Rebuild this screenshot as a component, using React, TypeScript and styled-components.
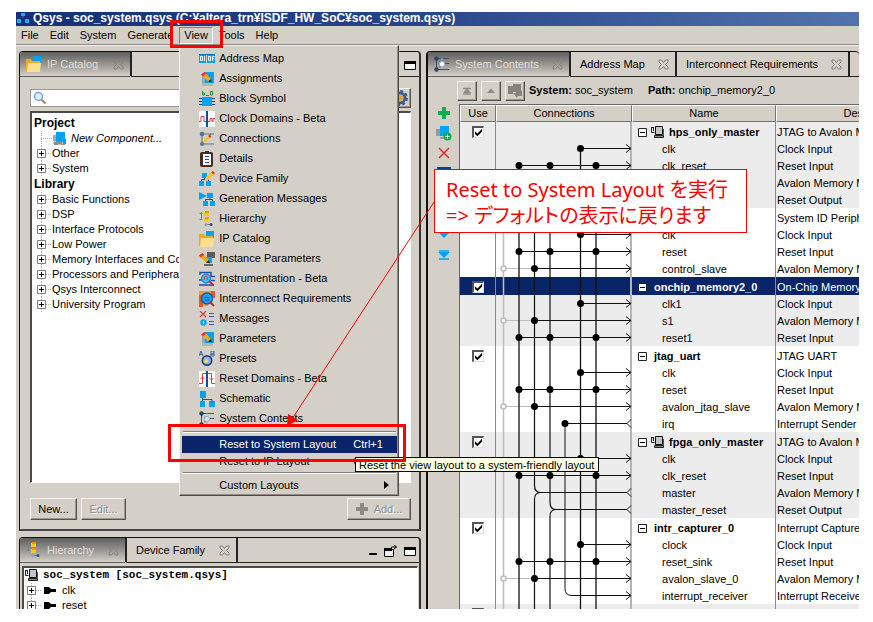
import React from "react";
import styled, { createGlobalStyle, css } from "styled-components";

const FACE = "#d4d0c8";
const NAVY = "#0a246a";
const AZURE = "#00a2f2";
const UI_FONT = '"Liberation Sans", "Noto Sans CJK JP", sans-serif';

const GlobalStyle = createGlobalStyle`
  * { box-sizing: border-box; }
  body { margin: 0; background: #fff; color: #000; font: 11px/15px ${UI_FONT}; }
  button, input { font: inherit; color: inherit; }
`;

/* ---------- shell ---------- */

const Page = styled.div`
  position: relative;
  height: 100vh;
  padding: 12px 14px 13px 16px;
  overflow: hidden;
`;

const Frame = styled.div`
  display: flex;
  flex-direction: column;
  height: 100%;
  background: ${FACE};
`;

const TitleBar = styled.header`
  display: flex;
  align-items: flex-start;
  gap: 4px;
  height: 14px;
  padding-left: 1px;
  overflow: hidden;
  white-space: nowrap;
  background: linear-gradient(to right, #14307a, #26438a 45%, #5373ab);
  color: #fff;
  font-size: 12px;
  line-height: 12px;
  font-weight: bold;
`;

const MenuBar = styled.nav`
  display: flex;
  align-items: center;
  gap: 1px;
  height: 19px;
  border-bottom: 1px solid #8d8a84;
  box-shadow: 0 1px 0 #f4f2ee;
`;

const MenuSlot = styled.div`
  position: relative;
`;

const MenuTitle = styled.button<{ $open?: boolean }>`
  height: 17px;
  padding: 0 4px;
  border: 1px solid transparent;
  background: transparent;
  line-height: 15px;
  ${(p) => p.$open && css`border-color: #808080 #fff #fff #808080;`}
`;

const Body = styled.main`
  display: flex;
  gap: 5px;
  flex: 1;
  min-height: 0;
  padding: 6px 0 0 3px;
`;

const LeftColumn = styled.div`
  display: flex;
  flex-direction: column;
  gap: 6px;
  flex: 403 1 0;
  min-width: 0;
`;

const Panel = styled.section<{ $open?: boolean; $grow?: number }>`
  display: flex;
  flex-direction: column;
  flex: ${(p) => p.$grow ?? 1} 1 0;
  min-width: 0;
  min-height: 0;
  overflow: hidden;
  border: 1px solid #111;
  border-width: ${(p) => (p.$open ? "1px 0 0 2px" : "1px 2px 2px 1px")};
  border-right-color: #333;
  border-bottom-color: #444;
  border-radius: 4px 4px 0 0;
`;

const BottomPanel = styled(Panel)`
  flex: 0 0 72px;
  border-bottom-width: 0;
`;

const TabStrip = styled.div`
  display: flex;
  height: 25px;
  flex: none;
`;

const Tab = styled.button<{ $active?: boolean; $basis: number }>`
  display: flex;
  align-items: center;
  flex: 0 0 ${(p) => p.$basis}px;
  gap: 5px;
  padding: 0 6px 0 9px;
  border: 0;
  border-right: 2px solid #222;
  border-bottom: 1px solid #222;
  background: transparent;
  white-space: nowrap;
  svg:last-child { margin-left: auto; }
  ${(p) =>
    p.$active &&
    css`
      padding-left: 6px;
      border-bottom-color: transparent;
      background: linear-gradient(#5f5f5f, #8b8986 40%, ${FACE});
      color: #dedcd8;
    `}
`;

const TabFill = styled.div`
  display: flex;
  flex: 1;
  align-items: center;
  justify-content: flex-end;
  gap: 6px;
  padding: 3px 3px 0 0;
  border-bottom: 1px solid #222;
`;

const PlainIconButton = styled.button`
  display: flex;
  padding: 0;
  border: 0;
  background: transparent;
`;

/* ---------- IP catalog ---------- */

const CatalogBody = styled.div`
  display: flex;
  flex-direction: column;
  flex: 1;
  min-height: 0;
  padding: 10px 8px 9px 10px;
`;

const SearchRow = styled.div`
  display: flex;
  align-items: center;
  gap: 4px;
  height: 21px;
`;

const SearchField = styled.label`
  display: flex;
  align-items: center;
  flex: 1;
  height: 18px;
  padding-left: 2px;
  border: 1px solid #9b9893;
  background: #fff;
`;

const SearchInput = styled.input`
  flex: 1;
  min-width: 0;
  height: 14px;
  border: 0;
  outline: 0;
  background: transparent;
`;

const RaisedButton = styled.button<{ $w: number; $h?: number }>`
  display: flex;
  align-items: center;
  justify-content: center;
  gap: 6px;
  width: ${(p) => p.$w}px;
  height: ${(p) => p.$h ?? 22}px;
  padding: 0;
  border: 1px solid;
  border-color: #f6f4f0 #55534f #55534f #f6f4f0;
  box-shadow: inset -1px -1px 0 #9a978f;
  background: ${FACE};
  &:disabled { color: #8d8a84; text-shadow: 1px 1px 0 #fff; }
`;

const TreeBox = styled.div`
  flex: 1;
  min-height: 0;
  margin-top: 3px;
  padding: 2px 0 0 2px;
  overflow: hidden;
  border: 1px solid;
  border-width: 2px 1px 1px 2px;
  border-color: #4d4b48 #fff #fff #4d4b48;
  background: #fff;
`;

const TreeList = styled.ul`
  margin: 0;
  padding: 0;
  list-style: none;
`;

const TreeHeading = styled.li`
  height: 16px;
  font-size: 12px;
  font-weight: bold;
  line-height: 16px;
`;

const TreeRow = styled.li<{ $italic?: boolean }>`
  display: flex;
  align-items: center;
  height: 15px;
  padding-left: 3px;
  font-style: ${(p) => (p.$italic ? "italic" : "normal")};
  white-space: nowrap;
`;

const Actions = styled.div`
  display: flex;
  gap: 4px;
  margin-top: 15px;
  button:last-child { margin-left: auto; }
`;

const HierarchyBox = styled(TreeBox)`
  margin: 3px 1px 0 2px;
  padding: 0;
  border-bottom: 0;
`;

const RootRow = styled.li`
  display: flex;
  align-items: center;
  gap: 4px;
  height: 15px;
  padding-left: 1px;
  font-family: "Liberation Mono", monospace;
  font-weight: bold;
  white-space: nowrap;
`;

const PinRow = styled(TreeRow)`
  gap: 6px;
  svg:first-child { margin-right: -4px; }
`;

/* ---------- popup menu ---------- */

const Popup = styled.div`
  position: absolute;
  z-index: 5;
  top: 18px;
  left: 0;
  width: 220px;
  padding: 3px 1px 1px 2px;
  border: 1px solid;
  border-color: #f6f4f0 #4d4b48 #4d4b48 #f6f4f0;
  box-shadow: inset -1px -1px 0 #8f8c86;
  background: ${FACE};
`;

const Item = styled.button<{ $compact?: boolean; $selected?: boolean }>`
  display: flex;
  align-items: center;
  gap: 4px;
  width: 100%;
  height: ${(p) => (p.$compact ? 17 : 20)}px;
  padding: 0 8px 0 ${(p) => (p.$compact ? 37 : 17)}px;
  border: 0;
  text-align: left;
  white-space: nowrap;
  background: ${(p) => (p.$selected ? NAVY : "transparent")};
  color: ${(p) => (p.$selected ? "#fff" : "#000")};
`;

const Shortcut = styled.span`
  width: 36px;
  margin-left: auto;
`;

const Arrow = styled.span`
  margin-left: auto;
  border: solid transparent;
  border-width: 4px 0 4px 5px;
  border-left-color: #000;
`;

const Rule = styled.hr`
  height: 2px;
  margin: 2px 1px 3px;
  border: 0;
  border-top: 1px solid #808080;
  border-bottom: 1px solid #fff;
`;

/* ---------- system contents ---------- */

const Toolbar = styled.div`
  display: flex;
  align-items: center;
  gap: 4px;
  flex: none;
  height: 27px;
  padding-left: 29px;
  white-space: nowrap;
`;

const PathText = styled.span`
  margin-right: 11px;
`;

const ContentRow = styled.div`
  display: flex;
  flex: 1;
  min-height: 0;
`;

const SideBar = styled.div`
  display: flex;
  flex-direction: column;
  gap: 6px;
  flex: 0 0 31px;
  padding-top: 1px;
`;

const SideGroup = styled.div`
  display: flex;
  flex-direction: column;
  align-items: center;
  gap: 4px;
`;

const SideButton = styled(PlainIconButton)`
  align-items: center;
  justify-content: center;
  width: 16px;
  height: 16px;
`;

const TableArea = styled.div`
  position: relative;
  flex: 1;
  min-width: 0;
  overflow: hidden;
  border-left: 1px solid #666;
  border-top: 1px solid #666;
  background: #fff;
`;

const Grid = styled.table`
  width: 506px;
  border-collapse: separate;
  border-spacing: 0;
  table-layout: fixed;
`;

const Th = styled.th<{ $w: number }>`
  width: ${(p) => p.$w}px;
  height: 17px;
  padding: 0;
  border: 1px solid;
  border-color: #fff #77746f #77746f #fff;
  background: ${FACE};
  font-weight: normal;
  line-height: 15px;
`;

const Tr = styled.tr<{ $shade?: boolean; $selected?: boolean; $head?: boolean }>`
  height: ${(p) => (p.$head ? 18 : 17)}px;
  background: ${(p) => (p.$selected ? NAVY : p.$shade ? "#ececec" : "#fff")};
  color: ${(p) => (p.$selected ? "#fff" : "#000")};
`;

const Td = styled.td`
  padding: 2px 0 0 1px;
  border-right: 1px solid #8a8a8a;
  line-height: 15px;
  white-space: nowrap;
  overflow: hidden;
`;

const WireTd = styled(Td)`
  border-right: 2px solid #b4b4b4;
`;

const NameCell = styled.div<{ $head?: boolean }>`
  display: flex;
  align-items: center;
  gap: ${(p) => (p.$head ? 4 : 0)}px;
  padding-left: ${(p) => (p.$head ? 5 : 29)}px;
  font-weight: ${(p) => (p.$head ? "bold" : "normal")};
`;

const NameLabel = styled.span<{ $indent?: boolean }>`
  padding-left: ${(p) => (p.$indent ? 3 : 0)}px;
`;

const Check = styled.input`
  display: block;
  appearance: none;
  width: 12px;
  height: 12px;
  margin: 0 auto;
  border: 1px solid;
  border-width: 2px 1px 1px 2px;
  border-color: #555 #ddd #ddd #555;
  background: #fff;
  &:checked::before {
    content: "";
    display: block;
    width: 9px;
    height: 9px;
    background: #000;
    clip-path: polygon(10% 35%, 38% 60%, 90% 8%, 90% 38%, 38% 92%, 10% 66%);
  }
`;

const Wires = styled.svg`
  position: absolute;
  top: 17px;
  left: 37px;
  width: 135px;
  height: 487px;
  pointer-events: none;
`;

/* ---------- callouts ---------- */

const Tooltip = styled.div`
  position: absolute;
  z-index: 6;
  left: 355px;
  top: 457px;
  height: 15px;
  padding: 0 4px 0 3px;
  border: 1px solid #000;
  background: #ffffe1;
  line-height: 14px;
  white-space: nowrap;
`;

const Highlight = styled.div<{ $x: number; $y: number; $w: number; $h: number }>`
  position: absolute;
  z-index: 8;
  left: ${(p) => p.$x}px;
  top: ${(p) => p.$y}px;
  width: ${(p) => p.$w}px;
  height: ${(p) => p.$h}px;
  border: 3px solid #f00;
  pointer-events: none;
`;

const Pointer = styled.svg`
  position: absolute;
  z-index: 7;
  left: 280px;
  top: 190px;
  pointer-events: none;
`;

const Note = styled.aside`
  position: absolute;
  z-index: 9;
  left: 434px;
  top: 169px;
  width: 313px;
  height: 64px;
  padding: 7px 0 0 11px;
  border: 1px solid #f00;
  background: #fff;
  color: #f00;
  font: 20px/26px "Noto Sans", "Noto Sans CJK JP", sans-serif;
  font-feature-settings: "palt";
  white-space: nowrap;
`;

/* ---------- icons ---------- */

const Drawing = styled.svg`
  flex: none;
`;

type P = { children: React.ReactNode; w?: number; h?: number };
const Svg = ({ children, w = 16, h = 16 }: P) => (
  <Drawing width={w} height={h} viewBox={`0 0 ${w} ${h}`} fill="none" aria-hidden="true">
    {children}
  </Drawing>
);

const Pencil = ({ dx = 0, dy = 0 }: { dx?: number; dy?: number }) => (
  <g transform={`translate(${dx} ${dy})`}>
    <path d="M0 2.500 3.500 0 10 7 7 9.500Z" fill="#f5a81c" />
    <path d="M0 2.500 3.500 0 5.200 1.800 1.800 4.400Z" fill="#e8352b" />
    <path d="M10 7 11 10.500 7 9.500Z" fill="#4a2f10" />
  </g>
);

const FolderIcon = () => (
  <Svg>
    <path d="M7 0h8v8H7z" fill={AZURE} />
    <path d="M0 3h5l1 2h8v10H0z" fill="#f2a91f" />
    <path d="M2 7h13l-1 9H1z" fill="#fddf94" />
  </Svg>
);
const ComponentIcon = () => (
  <Svg w={16} h={14}>
    <path d="M1 3h4v6H1z" fill="#a9a9a9" />
    <path d="M4 0h9v10H4z" fill={AZURE} />
    <path d="M2 10h8v2H2zM2 12.500h4M9 12.500h4" fill="#8b9096" stroke="#8b9096" />
    <path d="M11 7h3v5h-3z" fill={AZURE} />
  </Svg>
);
const AddComponentIcon = () => (
  <Svg>
    <path d="M0 4h5v7H0z" fill="#9a9a9a" />
    <path d="M4 1h9v10H4z" fill={AZURE} />
    <path d="M4 12h5v2H4z" fill="#9a9a9a" />
    <circle cx="11.500" cy="11.500" r="4" fill="#09b04c" />
    <path d="M9.500 11.500h4M11.500 9.500v4" stroke="#fff" />
  </Svg>
);
const AddressIcon = () => (
  <Svg>
    <path d="M0 3h7v9H0zM8 3h8v9H8z" fill={AZURE} />
    <path d="M0 3.500h16" stroke="#0070c8" />
    <path d="M1.500 5.500h2v4h-2zM5.500 5v5M9.500 5.500h2v4h-2zM13.500 10V5.500h2M13.500 7.500h1.500" stroke="#fff" />
  </Svg>
);
const AssignIcon = () => (
  <Svg>
    <path d="M6 1h9v11H6z" fill={AZURE} />
    <path d="M3 4h3v8H3z" fill="#8fa7b8" />
    <path d="M3 12h11v3H3z" fill="#b5b5b5" />
    <Pencil dx={2} dy={1} />
  </Svg>
);
const BlockIcon = () => (
  <Svg>
    <path d="M3 6h10v9H3z" fill={AZURE} />
    <path d="M0 7.500h3M0 10.500h3M0 13.500h3M13 7.500h3M13 10.500h3M13 13.500h3" stroke="#17406e" />
    <path d="M3.500 0v4h2V2H4M7 4.500h3M11.500 .500h2v3.500h-2z" stroke="#2b8a3a" />
  </Svg>
);
const ClockIcon = () => (
  <Svg>
    <path d="M0 0h16v16H0z" fill="#fff" />
    <path d="M0 10.500h2v-5h3v5h2M9 10.500h2v-3h2v3h1v-3h2" stroke="#e53935" />
    <path d="M8 0v16" stroke="#0b4fa0" strokeWidth="2" />
  </Svg>
);
const ConnIcon = () => (
  <Svg>
    <path d="M3 3h12M3 3v10h12M3 13 12 3" stroke="#5b7288" />
    <circle cx="3" cy="3" r="2.300" fill="#5b7288" />
    <circle cx="3" cy="13" r="2" fill="#5b7288" />
    <path d="m4 12 1-3 5-5 2 2-5 5z" fill="#f7c52b" />
    <path d="m9 5 2 2 1.500-1.500-2-2z" fill="#e8352b" />
  </Svg>
);
const DetailIcon = () => (
  <Svg>
    <rect x="1" y="1" width="13" height="15" rx="2" fill="#4a2b20" />
    <path d="M4 3h8v11H4z" fill="#fff" />
    <path d="M6 0h4v3H6z" fill="#333" />
    <path d="M6 5.500h4M6 8.500h4M6 11.500h4" stroke="#2c4a9a" />
  </Svg>
);
const DeviceIcon = () => (
  <Svg>
    <path d="M3 2h5v5H3zM0 10h5v5H0zM7 10h5v5H7z" fill={AZURE} />
    <path d="M5.500 7v2M2.500 10V8.500h7V10" stroke="#15568f" />
    <path d="m6 9 1-3 6-5 3 2-7 6z" fill="#f7c52b" />
    <path d="m12 1.500 2-1.500 2 2-1.500 1.500z" fill="#e8352b" />
  </Svg>
);
const GenIcon = () => (
  <Svg>
    <path d="M0 1 8 5 0 9z" fill={AZURE} />
    <path d="M8 2h6v5H8zM4 10h5v5H4zM11 10h5v5h-5z" fill={AZURE} />
    <path d="M11 7v2M6.500 10V8.500h7V10" stroke="#15568f" />
  </Svg>
);
const HierIcon = () => (
  <Svg>
    <path d="M2.500 1v8M.500 2.500h3M.500 8.500h3" stroke="#6d7f92" />
    <path d="M5 1h5v4H5zM5 7h5v4H5z" fill="#f7c52b" />
    <path d="M6 0h4v2H6zM6 6h4v2H6z" fill="#e39a12" />
    <path d="M7 13.500h5" stroke="#6d7f92" />
    <circle cx="7" cy="13.500" r="1.500" fill="#8fa0b0" />
    <circle cx="12" cy="13.500" r="1.500" fill="#34526f" />
  </Svg>
);
const InstIcon = () => (
  <Svg>
    <path d="M8 1h8v6H8z" fill="#5c5c5c" />
    <path d="M7 6h6v6H7z" fill={AZURE} />
    <path d="M5 13h9v2H5z" fill="#666" />
    <Pencil dx={0} dy={2} />
  </Svg>
);
const InstrIcon = () => (
  <Svg>
    <path d="M1 4V1.500h11v4h4M0 14h15M0 9h3M12 9.500h4" stroke="#1d4fa8" strokeWidth="1.500" />
    <circle cx="7" cy="7.500" r="4.500" fill="#39bdf5" stroke="#1668b8" />
    <path d="M5.500 9V6l1.500-1 1.500 1v3" stroke="#e53935" />
    <path d="m10 10 4.500 4.500" stroke="#d5232b" strokeWidth="2" />
  </Svg>
);
const InterIcon = () => (
  <Svg>
    <path d="M0 0h12v4H0z" fill="#f59a23" />
    <path d="M0 4h4v12H0zM12 0h4v7h-4z" fill="#ef5327" />
    <path d="M4 13h5v2H4z" fill="#f59a23" />
    <circle cx="8" cy="7.500" r="5.500" fill="#19a6ee" stroke="#0d61b4" strokeWidth="1.500" />
    <path d="M5.500 6.500h5M5.500 9h5" stroke="#0b3f8a" />
    <path d="m11 11 4 4" stroke="#d5232b" strokeWidth="2" />
  </Svg>
);
const MessageIcon = () => (
  <Svg>
    <path d="m1 0 6 6M7 0 1 6" stroke="#e53935" strokeWidth="1.300" />
    <circle cx="4.500" cy="11.500" r="3.200" fill={AZURE} />
    <path d="M4.500 10v3" stroke="#fff" />
    <path d="M10 2.500h5M10 5.500h5M10 10.500h5M10 13.500h5" stroke="#3d5f9f" />
  </Svg>
);
const PresetIcon = () => (
  <Svg>
    <path d="m0 5 2-5 2 5M1 3.500h2M12 0v5h3V3h-3 3V0z" stroke="#3d62a8" />
    <circle cx="8" cy="9.500" r="5.500" fill="#233f85" />
    <circle cx="8" cy="9.500" r="3.800" fill="#8fb8ea" />
    <circle cx="7" cy="10" r="2" fill="#f2dc48" />
  </Svg>
);
const ResetIcon = () => (
  <Svg>
    <path d="M0 0h16v16H0z" fill="#fff" />
    <path d="M0 12.500h3.500v-10h3.500M9 2.500h3.500v10H16M1.500 8l2-2 2 2M10.500 7l2 2 2-2" stroke="#e53935" />
    <path d="M8 0v16" stroke="#0b4fa0" strokeWidth="2" />
  </Svg>
);
const SchemIcon = () => (
  <Svg>
    <path d="M1 0h6v7H1zM1 10h5v6H1zM10 10h6v6h-6z" fill={AZURE} />
    <path d="M3.500 7v3M4 8.500h9V11" stroke="#15568f" />
  </Svg>
);
const ContentsIcon = ({ light }: { light?: boolean }) => (
  <Svg>
    <path d="M3 2.500h12M3 13.500h12M2.500 2v11M6 5.500v6M8 7.500h7" stroke="#405467" />
    <path d="M8 2v12" stroke={light ? "#a8c4e4" : "#9aa9b8"} strokeDasharray="2 1" />
    <circle cx="2.500" cy="2.500" r="2.200" fill="#294766" />
    <circle cx="2.500" cy="13.500" r="2.200" fill="#294766" />
    <circle cx="8" cy="8" r="2.600" fill={light ? "#fff" : "#d8e3ee"} stroke="#9ab4d0" />
  </Svg>
);
const CloseIcon = () => (
  <Svg w={11} h={11}>
    <path
      d="M1 1h2.500l2 2.500 2-2.500H10v2L7.500 5.500 10 8v2H7.500l-2-2.500-2 2.500H1V8l2.500-2.500L1 3z"
      stroke="#85827c"
    />
  </Svg>
);
const MaxIcon = () => (
  <Svg w={12} h={10}>
    <path d="M.5 .5h11v8H.5z" fill="#fff" stroke="#000" />
    <path d="M0 0h12v3H0z" fill="#000" />
  </Svg>
);
const MinIcon = () => (
  <Svg w={9} h={10}>
    <path d="M0 6h8v2H0z" fill="#000" />
  </Svg>
);
const DetachIcon = () => (
  <Svg w={14} h={13}>
    <path d="M.5 4.500h9v7h-9z" fill="#eee" stroke="#000" />
    <path d="M0 3h8v3H0z" fill="#000" />
    <path d="M7.500 5V2h5M10 0l2.500 2L10 4" stroke="#000" />
  </Svg>
);
const SearchIcon = () => (
  <Svg w={14} h={14}>
    <path d="m8.500 8.500 4 4" stroke="#b98a4a" strokeWidth="2.400" />
    <circle cx="5.500" cy="5.500" r="4" fill="#d9efff" stroke="#78a9d8" strokeWidth="1.500" />
  </Svg>
);
const GearIcon = () => (
  <Svg>
    <circle cx="8" cy="8" r="5" stroke="#3d5f94" strokeWidth="3" />
    <circle cx="8" cy="8" r="7" stroke="#3d5f94" strokeWidth="2" strokeDasharray="3 2.500" />
    <circle cx="8" cy="8" r="3" fill="#e8a030" />
  </Svg>
);
const Plus = ({ color }: { color: string }) => (
  <Svg w={12} h={12}>
    <path d="M6 0v12M0 6h12" stroke={color} strokeWidth="4" />
  </Svg>
);
const CrossIcon = () => (
  <Svg w={12} h={12}>
    <path d="m1 1 10 10M11 1 1 11" stroke="#e02b2b" strokeWidth="1.500" />
  </Svg>
);
const EditBarIcon = () => (
  <Svg>
    <path d="M1 2h14v12H1z" fill="#0a3c96" />
    <path d="M3 6h10v6H3z" fill="#fff" />
  </Svg>
);
const Triangle = ({ up, bar, color, size = 12 }: { up?: boolean; bar?: boolean; color: string; size?: number }) => (
  <Svg w={12} h={12}>
    <g transform={up ? "rotate(180 6 6)" : undefined}>
      <path d={size > 10 ? "M0 3h12L6 9z" : "M2 4h8L6 8.500z"} fill={color} />
      {bar && <path d={size > 10 ? "M1 2h10M1 10h10" : "M2 8.500h8M2 3h8"} stroke={color} strokeWidth="1.600" />}
    </g>
  </Svg>
);
const GreyPartIcon = () => (
  <Svg>
    <path d="M1 3h5v8H1zM6 1h8v8H6zM9 8h6v5H9z" fill="#85837e" />
    <path d="m6 10 4 5 2-5z" fill="#85837e" />
  </Svg>
);
const SystemIcon = () => (
  <Svg w={14} h={13}>
    <path d="M4.500 .500h7v8h-7z" fill="#c4c4c4" stroke="#111" />
    <path d="M.500 1v5.500h3M.500 1.500h2M2.500 1v4M5.500 9v2" stroke="#222" />
    <path d="M3.500 9.500h9v2h-9z" fill="#888" stroke="#222" />
    <path d="M12.500 3v6" stroke="#555" />
  </Svg>
);
const PinIcon = () => (
  <Svg w={12} h={9}>
    <path d="M0 1h5l2 2h5v3H7L5 8H0z" fill="#000" />
  </Svg>
);
const Expander = ({ link }: { link?: boolean }) => (
  <Svg w={15} h={15}>
    <path d="M4.500 0v15" stroke="#aaa" strokeDasharray="1 1" />
    {link && <path d="M9 7.500h6" stroke="#aaa" strokeDasharray="1 1" />}
    <path d="M.5 3.500h8v8h-8z" fill="#fff" stroke="#808080" />
    <path d="M2 7.500h5M4.500 5v5" stroke="#000" />
  </Svg>
);
const BranchIcon = () => (
  <Svg w={15} h={15}>
    <path d="M4.500 0v15M4 7.500h11" stroke="#aaa" strokeDasharray="1 1" />
  </Svg>
);
const Minus = () => (
  <Svg w={9} h={9}>
    <path d="M.5 .5h8v8h-8z" fill="#fff" stroke="#222" />
    <path d="M2 4.500h5" stroke="#000" />
  </Svg>
);
const LogoIcon = () => (
  <Svg w={12} h={12}>
    <path d="M4 1h4v3H4zM0 7h4v4H0zM8 7h4v4H8z" fill="#25a8f0" />
    <path d="M5.500 4h1v2h-1z" fill="#4d6ea5" />
  </Svg>
);

/* ---------- data ---------- */

const VIEW_ITEMS: [string, () => React.ReactElement][] = [
  ["Address Map", AddressIcon],
  ["Assignments", AssignIcon],
  ["Block Symbol", BlockIcon],
  ["Clock Domains - Beta", ClockIcon],
  ["Connections", ConnIcon],
  ["Details", DetailIcon],
  ["Device Family", DeviceIcon],
  ["Generation Messages", GenIcon],
  ["Hierarchy", HierIcon],
  ["IP Catalog", FolderIcon],
  ["Instance Parameters", InstIcon],
  ["Instrumentation - Beta", InstrIcon],
  ["Interconnect Requirements", InterIcon],
  ["Messages", MessageIcon],
  ["Parameters", AssignIcon],
  ["Presets", PresetIcon],
  ["Reset Domains - Beta", ResetIcon],
  ["Schematic", SchemIcon],
  ["System Contents", () => <ContentsIcon />],
];

const LIBRARY = [
  "Basic Functions",
  "DSP",
  "Interface Protocols",
  "Low Power",
  "Memory Interfaces and Controllers",
  "Processors and Peripherals",
  "Qsys Interconnect",
  "University Program",
];

type Module = { name: string; desc: string; system?: boolean; selected?: boolean; ports: [string, string][] };

const MM = "Avalon Memory Mapped Slave";
const MODULES: Module[] = [
  {
    name: "hps_only_master", desc: "JTAG to Avalon Master Bridge", system: true,
    ports: [["clk", "Clock Input"], ["clk_reset", "Reset Input"], ["master", MM], ["master_reset", "Reset Output"]],
  },
  {
    name: "sysid_qsys", desc: "System ID Peripheral",
    ports: [["clk", "Clock Input"], ["reset", "Reset Input"], ["control_slave", MM]],
  },
  {
    name: "onchip_memory2_0", desc: "On-Chip Memory (RAM or ROM)", selected: true,
    ports: [["clk1", "Clock Input"], ["s1", MM], ["reset1", "Reset Input"]],
  },
  {
    name: "jtag_uart", desc: "JTAG UART",
    ports: [["clk", "Clock Input"], ["reset", "Reset Input"], ["avalon_jtag_slave", MM], ["irq", "Interrupt Sender"]],
  },
  {
    name: "fpga_only_master", desc: "JTAG to Avalon Master Bridge", system: true,
    ports: [["clk", "Clock Input"], ["clk_reset", "Reset Input"], ["master", MM], ["master_reset", "Reset Output"]],
  },
  {
    name: "intr_capturer_0", desc: "Interrupt Capture Module",
    ports: [["clock", "Clock Input"], ["reset_sink", "Reset Input"], ["avalon_slave_0", MM], ["interrupt_receiver", "Interrupt Receiver"]],
  },
  { name: "led_pio", desc: "PIO (Parallel I/O)", ports: [] },
];

/* Centre line of every table row, in wire-drawing coordinates. */
const CENTRES: number[] = [];
MODULES.reduce((top, m) => {
  CENTRES.push(top + 9);
  m.ports.forEach((_, i) => CENTRES.push(top + 26 + i * 17 + 0.5));
  return top + 18 + m.ports.length * 17;
}, 0);

const LANE = { exported: 6.5, reset: 22, data: 37.5, reset2: 53, irq: 68, clock: 83.5, reset3: 99 };
const END = 134;

const WireDrawing = () => {
  const y = (r: number) => CENTRES[r];
  const bottom = 487;
  const out = (r: number) => <path key={`o${r}`} d={`M${END - 5} ${y(r) - 4}l5 4-5 4`} />;
  const into = (r: number) => <path key={`i${r}`} d={`M${END} ${y(r) - 4}l-4 4 4 4`} />;
  const dot = (x: number, r: number) => <circle key={`${x}-${r}`} cx={x} cy={y(r)} r="3.500" fill="#000" stroke="none" />;
  const clocks = [1, 6, 10, 14, 19, 24];
  const resets = [2, 7, 12, 15, 20, 25];
  const slaves = [8, 11, 16, 26];
  return (
    <Wires fill="none" stroke="#111" aria-hidden="true">
      <g stroke="#bdbdbd">
        <path d={`M${LANE.exported} ${y(3)}V${bottom}`} strokeWidth="1.500" />
        {slaves.map((r) => <path key={r} d={`M${LANE.exported} ${y(r)}H${LANE.data}`} />)}
        {slaves.map((r) => <circle key={`c${r}`} cx={LANE.exported} cy={y(r)} r="2.500" fill="#fff" strokeWidth="1.500" />)}
      </g>
      <path strokeWidth="1.300" d={`M${LANE.reset} ${y(2)}V${bottom}M${LANE.clock} ${y(1)}V${bottom}M${LANE.reset3} ${y(2)}V${bottom}`} />
      <path
        strokeWidth="1.200"
        d={`M${LANE.data} ${y(3)}V${y(21) - 7}q0 7 6 7H${END - 4}M${LANE.data} ${bottom}V${y(21) + 7}q0-7 6-7`}
      />
      <path
        strokeWidth="1.200"
        d={`M${LANE.reset2} ${y(2)}V${y(22) - 7}q0 7 6 7H${END - 4}M${LANE.reset2} ${bottom}V${y(22) + 7}q0-7 6-7`}
      />
      <path d={`M${END - 4} ${y(17)}H${LANE.irq}V${y(27) - 7}q0 7 7 7H${END}`} />
      {clocks.map((r) => <path key={r} d={`M${LANE.clock} ${y(r)}H${END}`} />)}
      {resets.map((r) => <path key={r} d={`M${LANE.reset} ${y(r)}H${END}`} />)}
      {slaves.map((r) => <path key={r} d={`M${LANE.data} ${y(r)}H${END}`} />)}
      {[...clocks, ...resets, ...slaves, 27].map(out)}
      {[17, 21, 22].map(into)}
      {clocks.map((r) => dot(LANE.clock, r))}
      {resets.flatMap((r) => [dot(LANE.reset, r), dot(LANE.reset2, r), dot(LANE.reset3, r)])}
      {slaves.map((r) => dot(LANE.data, r))}
      {dot(LANE.irq, 17)}
    </Wires>
  );
};

/* ---------- views ---------- */

const ViewMenu = () => (
  <Popup role="menu" aria-label="View">
    {VIEW_ITEMS.map(([label, Icon]) => (
      <Item key={label} role="menuitem">
        <Icon />
        {label}
      </Item>
    ))}
    <Rule />
    <Item role="menuitem" $compact $selected>
      Reset to System Layout<Shortcut>Ctrl+1</Shortcut>
    </Item>
    <Item role="menuitem" $compact>
      Reset to IP Layout<Shortcut>Ctrl+2</Shortcut>
    </Item>
    <Rule />
    <Item role="menuitem" $compact aria-haspopup="menu">
      Custom Layouts<Arrow />
    </Item>
  </Popup>
);

const Catalog = () => (
  <Panel aria-label="IP Catalog">
    <TabStrip role="tablist">
      <Tab role="tab" $active $basis={112}><FolderIcon />IP Catalog<CloseIcon /></Tab>
      <TabFill><PlainIconButton aria-label="Maximize"><MaxIcon /></PlainIconButton></TabFill>
    </TabStrip>
    <CatalogBody>
      <SearchRow>
        <SearchField><SearchIcon /><SearchInput type="text" aria-label="Search catalog" /></SearchField>
        <RaisedButton $w={22} $h={20} aria-label="Settings"><GearIcon /></RaisedButton>
      </SearchRow>
      <TreeBox>
        <TreeList>
          <TreeHeading>Project</TreeHeading>
          <TreeRow $italic><BranchIcon /><ComponentIcon />&nbsp;New Component...</TreeRow>
          <TreeRow><Expander link />Other</TreeRow>
          <TreeRow><Expander link />System</TreeRow>
          <TreeHeading>Library</TreeHeading>
          {LIBRARY.map((name) => <TreeRow key={name}><Expander link />{name}</TreeRow>)}
        </TreeList>
      </TreeBox>
      <Actions>
        <RaisedButton $w={47}>New...</RaisedButton>
        <RaisedButton $w={45} disabled>Edit...</RaisedButton>
        <RaisedButton $w={64} disabled><Plus color="#8d8a84" />Add...</RaisedButton>
      </Actions>
    </CatalogBody>
  </Panel>
);

const Hierarchy = () => (
  <BottomPanel aria-label="Hierarchy">
    <TabStrip role="tablist">
      <Tab role="tab" $active $basis={107}><HierIcon />Hierarchy<CloseIcon /></Tab>
      <Tab role="tab" $basis={111}>Device Family<CloseIcon /></Tab>
      <TabFill>
        <PlainIconButton aria-label="Minimize"><MinIcon /></PlainIconButton>
        <PlainIconButton aria-label="Detach"><DetachIcon /></PlainIconButton>
        <PlainIconButton aria-label="Maximize"><MaxIcon /></PlainIconButton>
      </TabFill>
    </TabStrip>
    <HierarchyBox>
      <TreeList>
        <RootRow><SystemIcon />soc_system [soc_system.qsys]</RootRow>
        <PinRow><Expander link /><PinIcon />clk</PinRow>
        <PinRow><Expander link /><PinIcon />reset</PinRow>
      </TreeList>
    </HierarchyBox>
  </BottomPanel>
);

const ContentsTable = () => (
  <TableArea>
    <Grid>
      <thead>
        <tr>
          <Th $w={36}>Use</Th>
          <Th $w={136}>Connections</Th>
          <Th $w={144}>Name</Th>
          <Th $w={190}>Description</Th>
        </tr>
      </thead>
      <tbody>
        {MODULES.map((m, i) => (
          <React.Fragment key={m.name}>
            <Tr $head $shade={i % 2 === 0} $selected={m.selected}>
              <Td><Check type="checkbox" defaultChecked aria-label={`Use ${m.name}`} /></Td>
              <WireTd />
              <Td>
                <NameCell $head>
                  <Minus />
                  {m.system && <SystemIcon />}
                  <NameLabel $indent={!m.system}>{m.name}</NameLabel>
                </NameCell>
              </Td>
              <Td>{m.desc}</Td>
            </Tr>
            {m.ports.map(([port, desc]) => (
              <Tr key={port} $shade={i % 2 === 0}>
                <Td />
                <WireTd />
                <Td><NameCell>{port}</NameCell></Td>
                <Td>{desc}</Td>
              </Tr>
            ))}
          </React.Fragment>
        ))}
      </tbody>
    </Grid>
    <WireDrawing />
  </TableArea>
);

const RightPanel = styled(Panel)`
  flex: 432 1 0;
`;

const Contents = () => (
  <RightPanel $open aria-label="System Contents">
    <TabStrip role="tablist">
      <Tab role="tab" $active $basis={143}><ContentsIcon light />System Contents<CloseIcon /></Tab>
      <Tab role="tab" $basis={106}>Address Map<CloseIcon /></Tab>
      <Tab role="tab" $basis={173}>Interconnect Requirements<CloseIcon /></Tab>
      <TabFill />
    </TabStrip>
    <Toolbar>
      <RaisedButton $w={20} $h={20} disabled aria-label="Move to top"><Triangle up bar color="#8d8a84" size={8} /></RaisedButton>
      <RaisedButton $w={20} $h={20} disabled aria-label="Move up"><Triangle up color="#8d8a84" size={8} /></RaisedButton>
      <RaisedButton $w={20} $h={20} disabled aria-label="Validate"><GreyPartIcon /></RaisedButton>
      <PathText><b>System:</b> soc_system</PathText>
      <PathText><b>Path:</b> onchip_memory2_0</PathText>
    </Toolbar>
    <ContentRow>
      <SideBar>
        <SideGroup>
          <SideButton aria-label="Add"><Plus color="#09b04c" /></SideButton>
          <SideButton aria-label="Add component"><AddComponentIcon /></SideButton>
          <SideButton aria-label="Remove"><CrossIcon /></SideButton>
          <SideButton aria-label="Edit"><EditBarIcon /></SideButton>
        </SideGroup>
        <SideGroup>
          <SideButton aria-label="Top"><Triangle up bar color={AZURE} /></SideButton>
          <SideButton aria-label="Up"><Triangle up color={AZURE} /></SideButton>
          <SideButton aria-label="Down"><Triangle color={AZURE} /></SideButton>
          <SideButton aria-label="Bottom"><Triangle bar color={AZURE} /></SideButton>
        </SideGroup>
      </SideBar>
      <ContentsTable />
    </ContentRow>
  </RightPanel>
);

export default function App() {
  return (
    <>
      <GlobalStyle />
      <Page>
        <Frame>
          <TitleBar>
            <LogoIcon />
            Qsys - soc_system.qsys (C:¥altera_trn¥ISDF_HW_SoC¥soc_system.qsys)
          </TitleBar>
          <MenuBar>
            {["File", "Edit", "System", "Generate", "View", "Tools", "Help"].map((label) => (
              <MenuSlot key={label}>
                <MenuTitle $open={label === "View"}>{label}</MenuTitle>
                {label === "View" && <ViewMenu />}
              </MenuSlot>
            ))}
          </MenuBar>
          <Body>
            <LeftColumn>
              <Catalog />
              <Hierarchy />
            </LeftColumn>
            <Contents />
          </Body>
        </Frame>
        <Tooltip role="tooltip">Reset the view layout to a system-friendly layout</Tooltip>
        <Pointer width="160" height="240" viewBox="0 0 160 240" aria-hidden="true">
          <path d="M154 12 12 229" stroke="#f00" fill="none" />
          <path d="M7 236 8 224 18 230z" fill="#f00" />
        </Pointer>
        <Highlight $x={170} $y={20} $w={53} $h={28} />
        <Highlight $x={168} $y={424} $w={238} $h={38} />
        <Note>
          Reset to System Layout を実行
          <br />
          =&gt; デフォルトの表示に戻ります
        </Note>
      </Page>
    </>
  );
}
